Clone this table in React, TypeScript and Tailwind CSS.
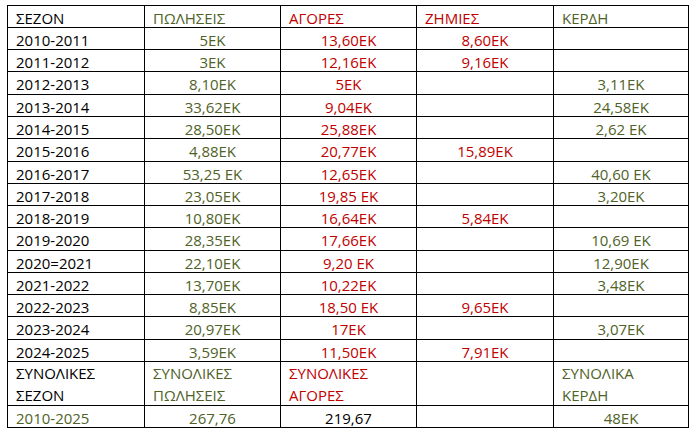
import React from "react";

const G = "text-[#4f6228]";
const R = "text-[#c00000]";
const K = "text-black";

type Row = [string, string, string, string, string];

const rows: Row[] = [
  ["2010-2011", "5ΕΚ", "13,60ΕΚ", "8,60ΕΚ", ""],
  ["2011-2012", "3ΕΚ", "12,16ΕΚ", "9,16ΕΚ", ""],
  ["2012-2013", "8,10ΕΚ", "5ΕΚ", "", "3,11ΕΚ"],
  ["2013-2014", "33,62ΕΚ", "9,04ΕΚ", "", "24,58ΕΚ"],
  ["2014-2015", "28,50ΕΚ", "25,88ΕΚ", "", "2,62 ΕΚ"],
  ["2015-2016", "4,88ΕΚ", "20,77ΕΚ", "15,89ΕΚ", ""],
  ["2016-2017", "53,25 ΕΚ", "12,65ΕΚ", "", "40,60 ΕΚ"],
  ["2017-2018", "23,05ΕΚ", "19,85 ΕΚ", "", "3,20ΕΚ"],
  ["2018-2019", "10,80ΕΚ", "16,64ΕΚ", "5,84ΕΚ", ""],
  ["2019-2020", "28,35ΕΚ", "17,66ΕΚ", "", "10,69 ΕΚ"],
  ["2020=2021", "22,10ΕΚ", "9,20 ΕΚ", "", "12,90ΕΚ"],
  ["2021-2022", "13,70ΕΚ", "10,22ΕΚ", "", "3,48ΕΚ"],
  ["2022-2023", "8,85ΕΚ", "18,50 ΕΚ", "9,65ΕΚ", ""],
  ["2023-2024", "20,97ΕΚ", "17ΕΚ", "", "3,07ΕΚ"],
  ["2024-2025", "3,59ΕΚ", "11,50ΕΚ", "7,91ΕΚ", ""],
];

const heights = [
  "h-[22px]", "h-[22px]", "h-[23px]", "h-[22px]", "h-[22px]", "h-[23px]", "h-[22px]", "h-[22px]",
  "h-[22px]", "h-[23px]", "h-[22px]", "h-[22px]", "h-[22px]", "h-[23px]", "h-[22px]",
];

const widths = ["w-[137px]", "w-[136px]", "w-[136px]", "w-[137px]", "w-[135px]"];
const dataColors = [K, G, R, R, G];

export default function App() {
  return (
    <div
      className="bg-white w-[698px] h-[434px] pt-[5px] pl-[7px]"
      style={{ fontFamily: '"Open Sans", "Noto Sans", sans-serif' }}
    >
      <div className="inline-flex flex-col border-l border-t border-black text-[15px] leading-[22px]">
        {/* header */}
        <div className="flex h-[22px]">
          {["ΣΕΖΟΝ", "ΠΩΛΗΣΕΙΣ", "ΑΓΟΡΕΣ", "ΖΗΜΙΕΣ", "ΚΕΡΔΗ"].map((t, i) => (
            <div
              key={i}
              className={`${widths[i]} ${dataColors[i]} border-r border-b border-black pl-2 pt-[2px] flex items-center whitespace-nowrap`}
            >
              {t}
            </div>
          ))}
        </div>
        {rows.map((r, ri) => (
          <div key={ri} className={`flex ${heights[ri]}`}>
            {r.map((t, i) => (
              <div
                key={i}
                className={`${widths[i]} ${dataColors[i]} border-r border-b border-black pt-[2px] flex items-center whitespace-nowrap ${
                  i === 0 ? "pl-2" : "justify-center"
                }`}
              >
                {t}
              </div>
            ))}
          </div>
        ))}
        {/* totals header */}
        <div className="flex h-[44px]">
          <div className={`${widths[0]} ${K} border-r border-b border-black pl-2 pt-[1px] flex flex-col justify-center`}>
            <span>ΣΥΝΟΛΙΚΕΣ</span>
            <span>ΣΕΖΟΝ</span>
          </div>
          <div className={`${widths[1]} ${G} border-r border-b border-black pl-2 pt-[1px] flex flex-col justify-center`}>
            <span>ΣΥΝΟΛΙΚΕΣ</span>
            <span>ΠΩΛΗΣΕΙΣ</span>
          </div>
          <div className={`${widths[2]} ${R} border-r border-b border-black pl-2 pt-[1px] flex flex-col justify-center`}>
            <span>ΣΥΝΟΛΙΚΕΣ</span>
            <span>ΑΓΟΡΕΣ</span>
          </div>
          <div className={`${widths[3]} border-r border-b border-black`} />
          <div className={`${widths[4]} ${G} border-r border-b border-black pl-2 pt-[1px] flex flex-col justify-center`}>
            <span>ΣΥΝΟΛΙΚΑ</span>
            <span>ΚΕΡΔΗ</span>
          </div>
        </div>
        {/* totals */}
        <div className="flex h-[22px]">
          <div className={`${widths[0]} ${G} border-r border-b border-black pl-2 pt-[2px] flex items-center`}>2010-2025</div>
          <div className={`${widths[1]} ${G} border-r border-b border-black pt-[2px] flex items-center justify-center`}>267,76</div>
          <div className={`${widths[2]} ${K} border-r border-b border-black pt-[2px] flex items-center justify-center`}>219,67</div>
          <div className={`${widths[3]} border-r border-b border-black`} />
          <div className={`${widths[4]} ${G} border-r border-b border-black pt-[2px] flex items-center justify-center`}>48ΕΚ</div>
        </div>
      </div>
    </div>
  );
}
